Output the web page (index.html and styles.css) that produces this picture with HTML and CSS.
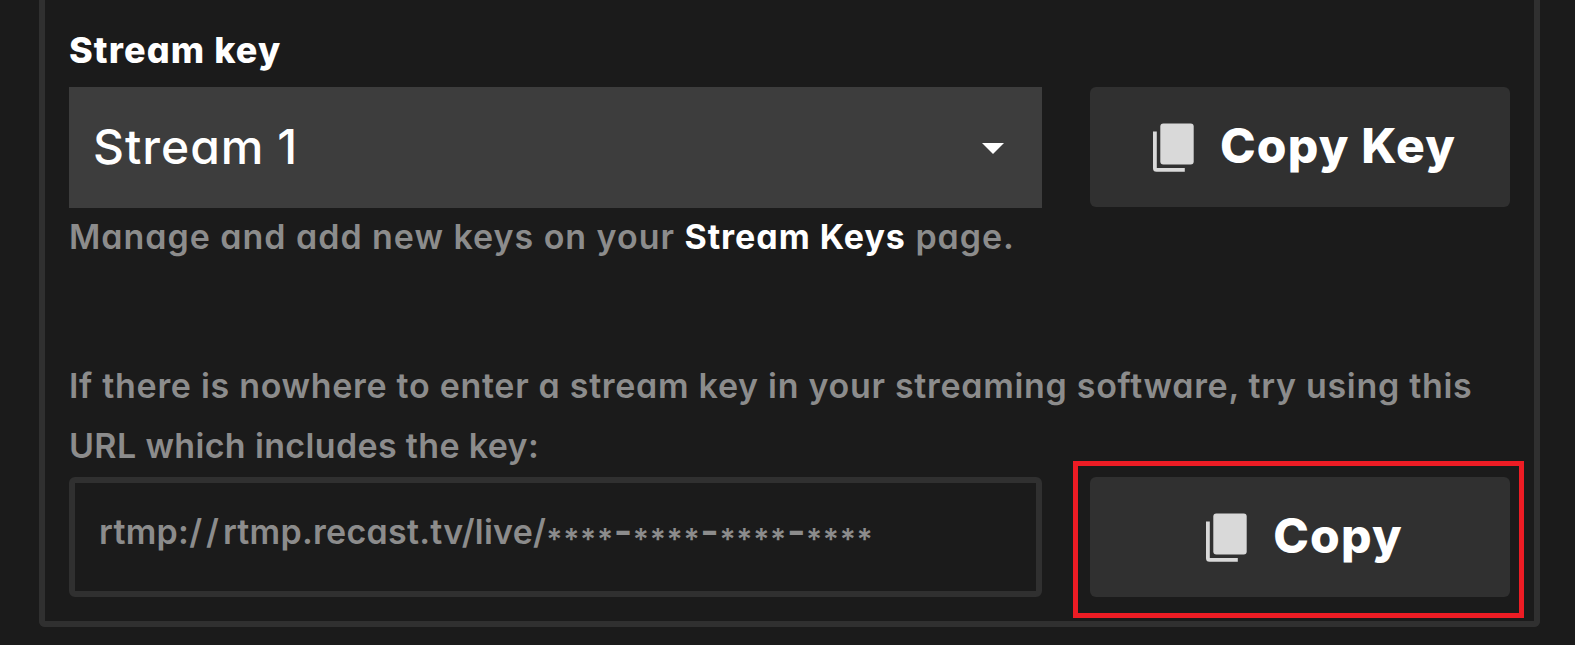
FILE: index.html
```html
<!DOCTYPE html>
<html lang="en">
  <head>
    <meta charset="UTF-8" />
    <meta name="viewport" content="width=device-width, initial-scale=1.0" />
    <title>Stream key</title>
    <link rel="stylesheet" href="styles.css">
  </head>
  <body>
    <div class="panel">
      <h2 class="label">Stream key</h2>
      <div class="row">
        <div class="select">
          <span class="value">Stream <span class="number">1</span></span>
          <svg class="caret" viewBox="0 0 22 11"><path d="M0 0h22L11 11z" /></svg>
        </div>
        <button class="copy_btn" type="button">
          <svg class="copy_icon" viewBox="0 0 41 49"><rect x="7.3" y="0.5" width="33.4" height="41" rx="3" /><path d="M0 8.5h3.8v36.5h28v3.8H3.5a3.5 3.5 0 0 1-3.5-3.5z" /></svg>
          <span class="btn_text">Copy Key</span>
        </button>
      </div>
      <p class="hint">Manage and add new keys on your <a class="link">Stream Keys</a> page.</p>
      <p class="info">
        <span class="line1">If there is nowhere to enter a stream key in your streaming software, try using this</span><br />
        <span class="line2">URL which includes the key:</span>
      </p>
      <div class="row">
        <div class="url_box">rtmp:<span class="slashes">//</span>rtmp.recast.tv/live/<span class="mask">****<span class="dash">-</span>****<span class="dash">-</span>****<span class="dash">-</span>****</span></div>
        <div class="highlight">
          <button class="copy_btn" type="button">
            <svg class="copy_icon" viewBox="0 0 41 49"><rect x="7.3" y="0.5" width="33.4" height="41" rx="3" /><path d="M0 8.5h3.8v36.5h28v3.8H3.5a3.5 3.5 0 0 1-3.5-3.5z" /></svg>
            <span class="btn_text">Copy</span>
          </button>
        </div>
      </div>
    </div>
  </body>
</html>
```
FILE: styles.css
```css
body {
  margin: 0;
  height: 645px;
  overflow: hidden;
  background-color: #1b1b1b;
  color: #fff;
  font-family: Inter, "Open Sans", sans-serif;
  /* single-storey a */
  font-feature-settings: "cv11";
}
.panel {
  box-sizing: border-box;
  width: 1501px;
  height: 627px;
  margin-left: 39px;
  padding: 20px 24px 0;
  border: 6px solid #303030;
  border-top: 0;
  border-radius: 0 0 6px 6px;
}
.label {
  margin: 0;
  height: 67px;
  font-size: 36px;
  line-height: 60px;
  font-weight: 800;
  letter-spacing: 1.1px;
}
.row {
  display: flex;
  gap: 48px;
}
.select {
  display: flex;
  align-items: center;
  justify-content: space-between;
  box-sizing: border-box;
  width: 973px;
  height: 121px;
  padding: 0 38px 0 24px;
  background-color: #3d3d3d;
}
.value {
  padding-bottom: 2px;
  font-size: 48px;
  font-weight: 500;
  letter-spacing: 1px;
}
.number {
  margin-left: -1px;
}
.caret {
  width: 22px;
  height: 11px;
  margin-top: 2px;
  fill: #fff;
}
.copy_btn {
  display: flex;
  align-items: center;
  justify-content: center;
  gap: 26px;
  width: 420px;
  height: 120px;
  padding: 0 0 0 9px;
  border: 0;
  border-radius: 6px;
  background-color: #303030;
  color: #fff;
  font: inherit;
  font-feature-settings: inherit;
}
.copy_icon {
  width: 41px;
  height: 49px;
  fill: #d9d9d9;
}
.btn_text {
  padding-bottom: 3px;
  font-size: 48px;
  font-weight: 800;
  letter-spacing: 1.2px;
}
.hint,
.info {
  margin: 0;
  color: #8c8c8c;
  font-size: 34px;
  line-height: 60px;
  font-weight: 600;
  white-space: nowrap;
}
.hint {
  margin-top: -1px;
  letter-spacing: 0.97px;
}
.link {
  color: #fff;
  font-weight: 700;
}
.info {
  margin-top: 89px;
}
.line1 {
  letter-spacing: 0.7px;
}
.line2 {
  letter-spacing: 0.35px;
}
.url_box {
  box-sizing: border-box;
  width: 973px;
  height: 120px;
  padding: 19px 24px;
  border: 6px solid #303030;
  border-radius: 6px;
  color: #8c8c8c;
  font-size: 34px;
  line-height: 60px;
  font-weight: 600;
  letter-spacing: 0.27px;
  white-space: nowrap;
}
.info + .row {
  margin-top: 1px;
}
.slashes {
  letter-spacing: 4px;
}
.mask {
  display: inline-block;
  font-size: 30px;
  line-height: 30px;
  vertical-align: -6px;
  letter-spacing: 0.7px;
}
.dash {
  font-size: 40px;
  line-height: 0;
  vertical-align: 5px;
  letter-spacing: 0.4px;
}
.highlight {
  margin: -16px -14px 0 -17px;
  padding: 11px 9px 16px 12px;
  border: 5px solid #ed1c24;
}
```
